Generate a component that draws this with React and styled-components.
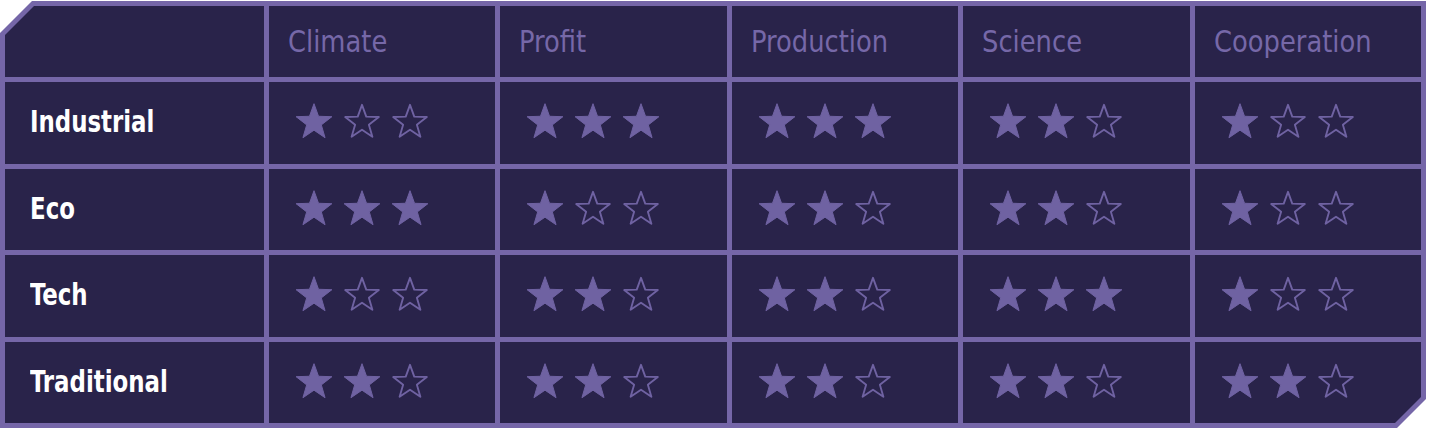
import React from "react";
import styled, { createGlobalStyle } from "styled-components";

const Global = createGlobalStyle`
  html, body { margin: 0; padding: 0; background: #ffffff; }
  body { font-family: "DejaVu Sans Condensed", "DejaVu Sans", sans-serif; }
`;

const BORDER = "#7566a8";
const CELL = "#29234a";
const STAR = "#6f62a2";

const Page = styled.div`
  padding-top: 1px;
  width: 1426px;
`;

const Board = styled.div`
  display: grid;
  grid-template-columns: 259px repeat(5, 1fr);
  grid-template-rows: 71px repeat(4, 1fr);
  gap: 5px;
  padding: 5px;
  height: 427px;
  box-sizing: border-box;
  background: ${BORDER};
  clip-path: polygon(32px 0, 100% 0, 100% calc(100% - 29px), calc(100% - 29px) 100%, 0 100%, 0 32px);
`;

const Cell = styled.div`
  background: ${CELL};
  display: flex;
  align-items: center;
  padding-left: ${(p) => p.$pad || 26}px;
  min-width: 0;
  white-space: nowrap;
  ${(p) => p.$cut === "tl" && `clip-path: polygon(29px 0, 100% 0, 100% 100%, 0 100%, 0 29px);`}
  ${(p) => p.$cut === "br" && `clip-path: polygon(0 0, 100% 0, 100% calc(100% - 26px), calc(100% - 26px) 100%, 0 100%);`}
`;

const HeadText = styled.span`
  display: inline-block;
  color: #7668a8;
  font-size: 31px;
  font-weight: 400;
  transform: scaleX(0.925);
  transform-origin: left center;
  margin-top: -2px;
`;

const RowLabel = styled.span`
  display: inline-block;
  color: #ffffff;
  font-size: 31px;
  font-weight: 700;
  transform: scaleX(0.82);
  transform-origin: left center;
  margin-top: -3px;
`;

const Stars = styled.div`
  display: flex;
  gap: 10px;
  align-items: center;
  margin-top: -3px;
`;

const StarSvg = styled.svg`
  width: 38px;
  height: 36px;
  display: block;
`;

const starPoints = (() => {
  const cx = 19, cy = 19.5, R = 18.8, r = 7.7;
  const pts = [];
  for (let i = 0; i < 10; i++) {
    const rad = i % 2 === 0 ? R : r;
    const a = -Math.PI / 2 + (i * Math.PI) / 5;
    pts.push(`${(cx + rad * Math.cos(a)).toFixed(2)},${(cy + rad * Math.sin(a)).toFixed(2)}`);
  }
  return pts.join(" ");
})();

const Star = ({ filled }) => (
  <StarSvg viewBox="0 0 38 36">
    {filled ? (
      <polygon points={starPoints} fill={STAR} stroke={STAR} strokeWidth="1" strokeLinejoin="round" />
    ) : (
      <polygon
        points={starPoints}
        fill="none"
        stroke={STAR}
        strokeWidth="2"
        strokeLinejoin="round"
        transform="translate(19 19.5) scale(0.94) translate(-19 -19.5)"
      />
    )}
  </StarSvg>
);

const Rating = ({ value }) => (
  <Stars>
    {[0, 1, 2].map((i) => (
      <Star key={i} filled={i < value} />
    ))}
  </Stars>
);

const columns = ["Climate", "Profit", "Production", "Science", "Cooperation"];
const rows = [
  { name: "Industrial", values: [1, 3, 3, 2, 1] },
  { name: "Eco", values: [3, 1, 2, 2, 1] },
  { name: "Tech", values: [1, 2, 2, 3, 1] },
  { name: "Traditional", values: [2, 2, 2, 2, 2] },
];

export default function App() {
  return (
    <Page>
      <Global />
      <Board>
        <Cell $cut="tl" />
        {columns.map((c) => (
          <Cell key={c} $pad={19}>
            <HeadText>{c}</HeadText>
          </Cell>
        ))}
        {rows.map((r, ri) => (
          <React.Fragment key={r.name}>
            <Cell $pad={25}>
              <RowLabel>{r.name}</RowLabel>
            </Cell>
            {r.values.map((v, ci) => (
              <Cell
                key={ci}
                $pad={26}
                $cut={ri === rows.length - 1 && ci === r.values.length - 1 ? "br" : undefined}
              >
                <Rating value={v} />
              </Cell>
            ))}
          </React.Fragment>
        ))}
      </Board>
    </Page>
  );
}
